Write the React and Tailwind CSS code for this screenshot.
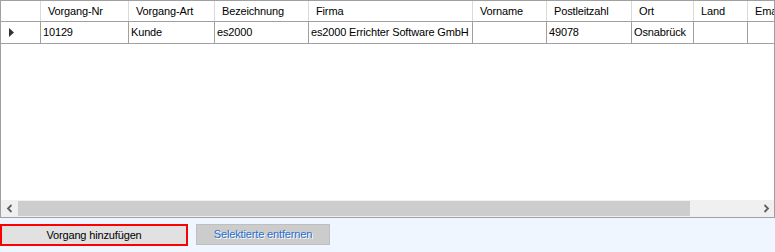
const columns = [
  { name: "Vorgang-Nr", w: 88, value: "10129" },
  { name: "Vorgang-Art", w: 86, value: "Kunde" },
  { name: "Bezeichnung", w: 94, value: "es2000" },
  { name: "Firma", w: 164, value: "es2000 Errichter Software GmbH" },
  { name: "Vorname", w: 74, value: "" },
  { name: "Postleitzahl", w: 85, value: "49078" },
  { name: "Ort", w: 62, value: "Osnabrück" },
  { name: "Land", w: 54, value: "" },
  { name: "Email", w: 90, value: "" },
];

function Chevron({ dir }) {
  return (
    <svg width="8" height="9" viewBox="0 0 8 9">
      {dir === "left" ? (
        <polyline points="5.5,1 2,4.5 5.5,8" fill="none" stroke="#606060" strokeWidth="1.8" />
      ) : (
        <polyline points="2.5,1 6,4.5 2.5,8" fill="none" stroke="#606060" strokeWidth="1.8" />
      )}
    </svg>
  );
}

export default function App() {
  return (
    <div
      className="w-[775px] h-[252px] bg-[#eff6ff] overflow-hidden text-[11px] text-black tracking-[-0.15px]"
      style={{ fontFamily: '"Liberation Sans", Arial, sans-serif' }}
    >
      <div className="h-[218px] border border-[#a0a0a0] bg-white flex flex-col overflow-hidden">
        {/* header */}
        <div className="flex h-[21px] border-b border-[#a0a0a0] flex-none">
          <div className="w-[40px] flex-none border-r border-[#d9d9d9]" />
          {columns.map((c) => (
            <div
              key={c.name}
              className="flex-none flex items-center pl-[7px] border-r border-[#d9d9d9] whitespace-nowrap overflow-hidden"
              style={{ width: c.w }}
            >
              {c.name}
            </div>
          ))}
        </div>
        {/* data row */}
        <div className="flex h-[22px] border-b border-[#a0a0a0] flex-none">
          <div className="w-[40px] flex-none border-r border-[#a0a0a0] flex items-center pl-[8px]">
            <svg width="5" height="9" viewBox="0 0 5 9">
              <polygon points="0,0 5,4.5 0,9" fill="#333" />
            </svg>
          </div>
          {columns.map((c) => (
            <div
              key={c.name}
              className="flex-none flex items-center pl-[2px] border-r border-[#a0a0a0] whitespace-nowrap overflow-hidden"
              style={{ width: c.w }}
            >
              {c.value}
            </div>
          ))}
        </div>
        <div className="flex-1" />
        {/* horizontal scrollbar */}
        <div className="h-[17px] flex-none flex bg-[#f0f0f0]">
          <div className="w-[17px] flex-none flex items-center justify-center">
            <Chevron dir="left" />
          </div>
          <div className="flex-1 flex items-center">
            <div className="h-[15px] w-[672px] bg-[#cdcdcd]" />
          </div>
          <div className="w-[17px] flex-none flex items-center justify-center">
            <Chevron dir="right" />
          </div>
        </div>
      </div>
      <div className="flex items-start gap-[8px] mt-[6px]">
        <button className="w-[188px] h-[22px] bg-[#e1e1e1] border-2 border-[#ff0000] flex items-center justify-center text-black text-[11px]">
          Vorgang hinzufügen
        </button>
        <button
          className="w-[134px] h-[21px] bg-[#cccccc] border border-[#bfbfbf] flex items-center justify-center text-[#1f6fcf] text-[11px]"
          style={{ textShadow: "1px 1px 0 #ffffff" }}
        >
          Selektierte entfernen
        </button>
      </div>
    </div>
  );
}
